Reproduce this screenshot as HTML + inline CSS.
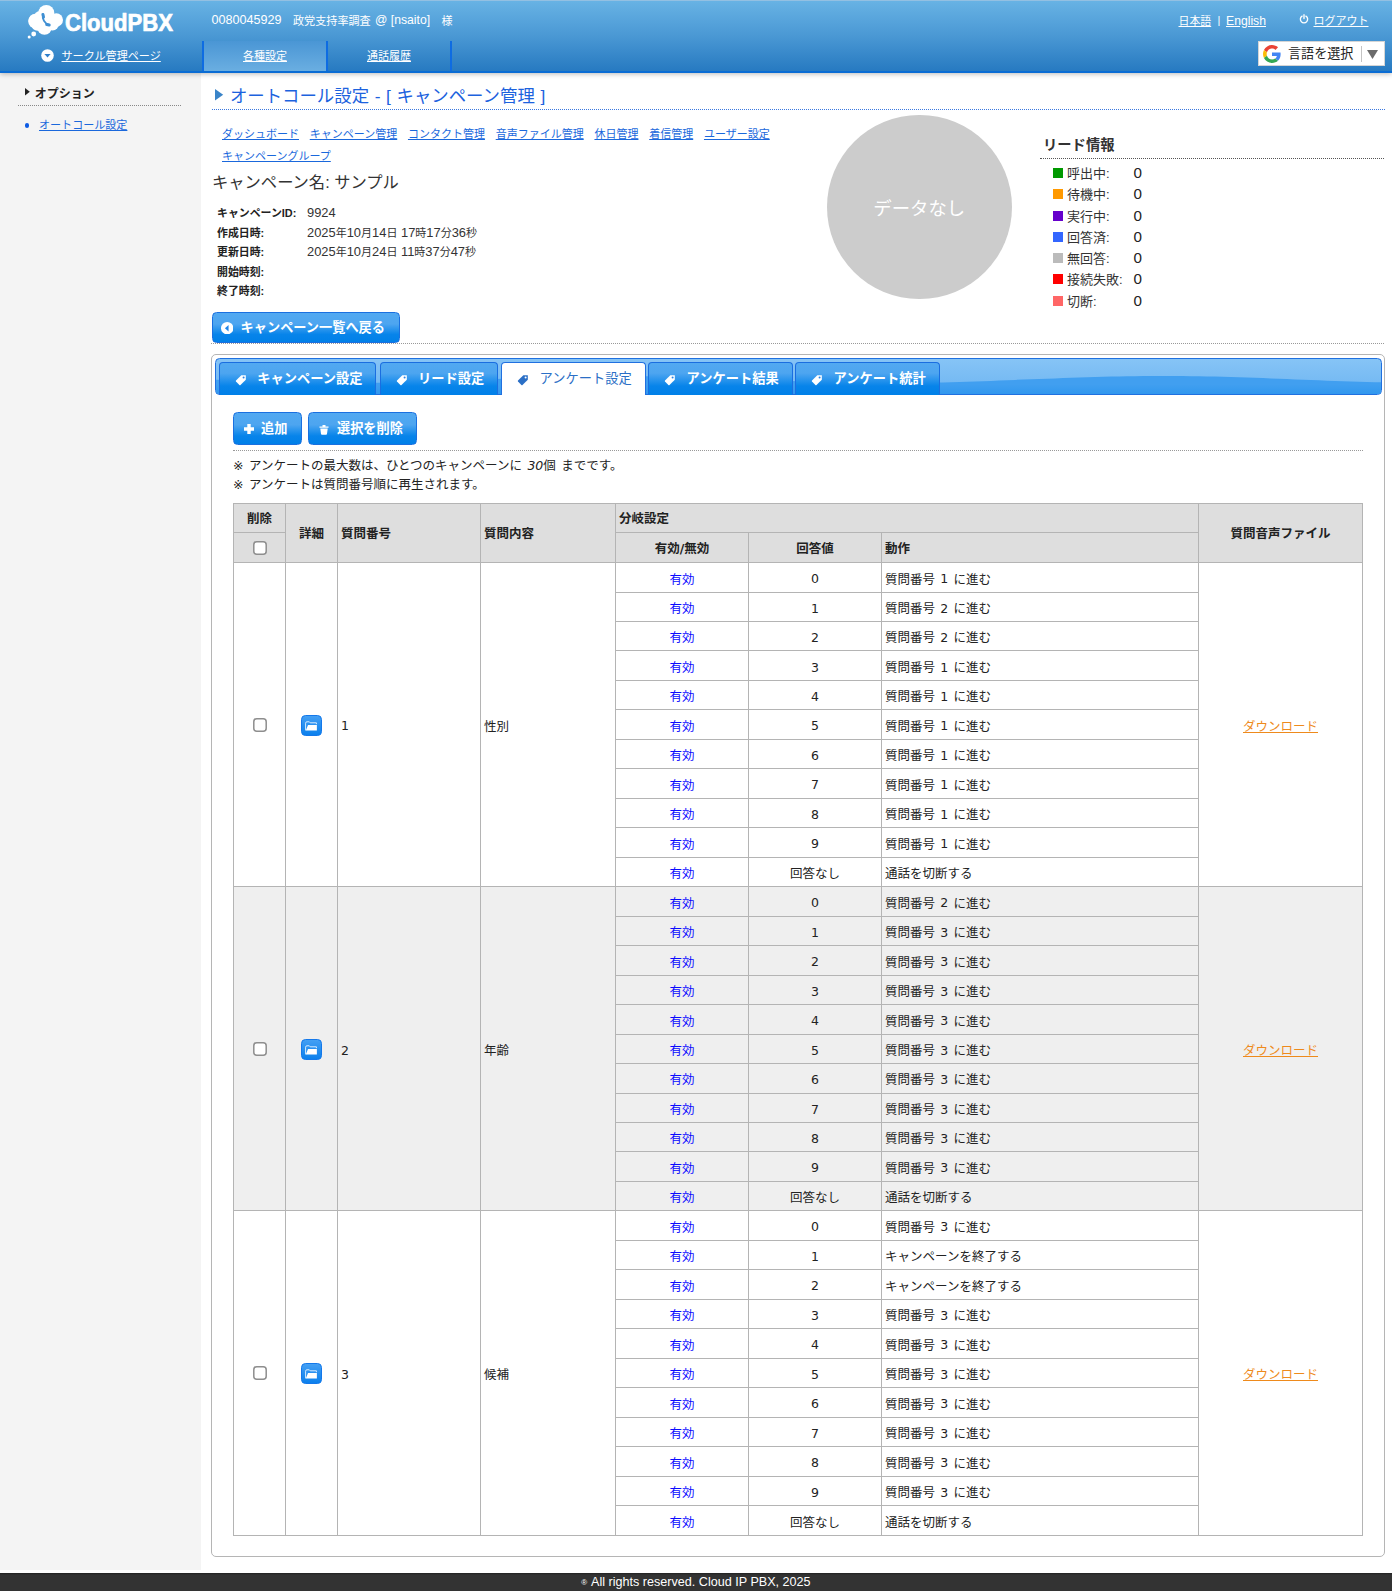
<!DOCTYPE html>
<html lang="ja">
<head>
<meta charset="utf-8">
<title>CloudPBX - オートコール設定</title>
<style>
html,body{margin:0;padding:0;}
html{overflow:hidden;}
body{width:1392px;height:1591px;position:relative;overflow:hidden;background:#fff;
 font-family:"Liberation Sans","Noto Sans CJK JP",sans-serif;font-size:12px;color:#333;}
a{color:#1a68dc;text-decoration:underline;}
.abs{position:absolute;}
/* header */
#hd{position:absolute;left:0;top:0;width:1392px;height:71px;
 background:linear-gradient(#93c0e2 0,#93c0e2 1px,#67b2e4 1.5px,#4a98d4 36px,#277ac1 71px);border-bottom:2px solid #0a6cd4;box-shadow:0 1px 5px rgba(0,0,0,.28);z-index:5;}
#hd a{color:#fff;}
#logo{position:absolute;left:20px;top:0;}
#who span{position:absolute;top:13px;color:#fff;font-size:12.6px;line-height:15px;white-space:nowrap;}
#circle{position:absolute;left:41px;top:48px;color:#fff;font-size:11.1px;line-height:15px;white-space:nowrap;}
#circle a{position:absolute;left:20.5px;top:1px;}
.ntab{position:absolute;top:41px;height:30px;border-left:2px solid #0e6ce2;box-sizing:border-box;text-align:center;font-size:11px;line-height:30px;color:#fff;}
.ntab.on{background:linear-gradient(#4a96d5,#6aaee1);}
#lang span,#lang a{position:absolute;top:13.5px;color:#fff;font-size:12.2px;line-height:15px;white-space:nowrap;}
#logout a{position:absolute;left:1313.5px;top:14px;color:#fff;font-size:11px;line-height:15px;white-space:nowrap;}
#gt{position:absolute;left:1258px;top:41px;width:126.5px;height:25px;background:#fff;border:1px solid #d5d5d5;box-sizing:border-box;color:#222;font-size:13.1px;line-height:23px;white-space:nowrap;}
/* sidebar */
#side{position:absolute;left:0;top:72px;width:201px;height:1498px;background:#f4f4f4;}
#side h3{position:absolute;left:34.8px;top:15.2px;margin:0;font-size:12px;line-height:14px;color:#222;font-weight:bold;white-space:nowrap;}
#side .dot{position:absolute;left:18px;top:33px;width:163px;border-top:1px dotted #888;}
#side .it{position:absolute;left:25px;top:45.8px;font-size:11px;line-height:14px;white-space:nowrap;color:#1a6fd6;}
/* main */
#title{position:absolute;left:229.9px;top:84px;font-size:17.4px;line-height:24px;color:#1c62de;word-spacing:0.8px;white-space:nowrap;}
.dotline{position:absolute;height:0;border-top:1px dotted #999;}
#sub{position:absolute;left:222px;top:123px;width:580px;font-size:11px;line-height:22px;}
#sub a{margin-right:7.7px;white-space:nowrap;}
#cname{position:absolute;left:212px;top:170px;font-size:16.3px;line-height:24px;color:#333;white-space:nowrap;}
#info{position:absolute;left:217px;top:203px;font-size:12.9px;line-height:19.5px;color:#333;}
#info b{font-size:10.9px;}
#info u{font-size:11px;text-decoration:none;}
#info div{height:19.5px;white-space:nowrap;}
#info b{display:inline-block;width:90px;color:#222;}
.btn{position:absolute;box-sizing:border-box;border:1px solid #1a70e0;border-radius:4.5px;color:#fff;font-weight:bold;
 background:linear-gradient(#52a9f1 0%,#4da5f0 38%,#0784ea 74%,#0080e8 100%);white-space:nowrap;font-size:13.2px;}
#back{left:212px;top:311.5px;width:188px;height:31.5px;line-height:30px;padding-left:27.6px;}
#pie{position:absolute;left:827px;top:114.8px;width:184.5px;height:184.5px;border-radius:50%;background:#ccc;color:#fff;font-size:18.4px;line-height:187px;text-align:center;}
#lead{position:absolute;left:1043px;top:136px;font-size:14.3px;line-height:18px;font-weight:bold;color:#333;white-space:nowrap;}
#legend{position:absolute;left:1053px;top:163px;font-size:13px;color:#333;}
#legend div{height:21.3px;line-height:21.3px;white-space:nowrap;position:relative;}
#legend i{display:inline-block;width:10px;height:10px;vertical-align:0;margin-right:4px;}
#legend span{position:absolute;left:80.5px;top:-1px;font-size:15.2px;color:#222;}
/* tabs box */
#box{position:absolute;left:211px;top:354px;width:1173.5px;height:1203px;box-sizing:border-box;border:1px solid #b5b5b5;border-radius:5px;background:#fff;}
#tbar{position:absolute;left:215px;top:358px;width:1166.5px;height:37px;box-sizing:border-box;border:1px solid #2070e0;border-radius:4.5px;overflow:hidden;
 background:linear-gradient(#86c4f6 0%,#76baf3 65%,#72b8f3 100%);}
#tbar svg{position:absolute;left:-1px;top:-1px;}
.tab{position:absolute;top:362px;height:33px;box-sizing:border-box;border:1px solid #1a6ee0;border-bottom:none;border-radius:4px 4px 0 0;
 background:linear-gradient(#52a9f1 0%,#4da5f0 32%,#0784ea 72%,#0080e8 100%);color:#fff;font-weight:bold;font-size:13.25px;line-height:32px;white-space:nowrap;padding-left:37.5px;}
.tab.on{background:#fff;color:#2b6fc6;font-weight:normal;border-color:#2070e0;height:33px;}
.tab svg{position:absolute;left:15px;top:10.5px;}
#add{left:233px;top:412px;width:69px;height:33px;line-height:31px;padding-left:27px;}
#del{left:308px;top:412px;width:109px;height:33px;line-height:31px;padding-left:28px;}
#note{position:absolute;left:233px;top:457.3px;font-size:12.5px;word-spacing:1.5px;line-height:18.6px;color:#222;white-space:nowrap;font-family:"DejaVu Sans","Noto Sans CJK JP",sans-serif;}
/* table */
#tb{position:absolute;left:233px;top:502.6px;width:1130px;border-collapse:collapse;table-layout:fixed;font-family:"DejaVu Sans","Noto Sans CJK JP",sans-serif;font-size:12.5px;word-spacing:1.3px;color:#222;}
#tb td,#tb th{border:1px solid #b4b4b4;padding:3.6px 3px 0 3px;overflow:hidden;white-space:nowrap;text-align:left;vertical-align:middle;}
#tb th{background:#dedede;font-weight:bold;height:27.8px;color:#222;padding-top:0.4px;}
#tb tr.h2 th{height:29.3px;padding-top:0;}
#tb tr.h2 th .cb{position:relative;top:-0.5px;}
#tb th[rowspan]{padding-top:0;padding-bottom:1.6px;height:26.6px;}
#tb td{height:24.875px;line-height:18px;}
#tb .c{text-align:center;}
#tb .en{color:#0a0aff;}
#tb tr.even td{background:#efefef;}
#tb .num{font-weight:normal;}
#tb td.ic{padding:0;line-height:0;text-align:center;}
#tb .j{position:relative;top:0.4px;}
#tb .d{position:relative;top:-0.4px;}
.cb{display:inline-block;vertical-align:middle;}
.fold{display:block;margin:0 auto;position:relative;top:1px;}
#tb td.ic .cb{display:block;margin:0 auto;position:relative;top:0.5px;}
.dl{color:#ee8a1c;text-decoration:underline;}
#ft{position:absolute;left:0;top:1572.5px;width:1392px;height:18.5px;background:linear-gradient(#222 0,#333 2px);color:#fff;font-size:12.6px;line-height:19.5px;text-align:center;white-space:nowrap;}
</style>
</head>
<body>
<div id="hd">
  <div id="logo">
    <svg width="170" height="45" viewBox="20 0 170 45">
      <g fill="#fff">
        <circle cx="46.300" cy="13" r="8"/><circle cx="35.200" cy="20.500" r="6.700"/><circle cx="56.300" cy="20" r="6.700"/><circle cx="44.500" cy="27.500" r="7.300"/><circle cx="40" cy="17" r="6"/><circle cx="51" cy="22" r="7"/><circle cx="37.500" cy="24.500" r="6.200"/><circle cx="52.500" cy="24" r="6.500"/><circle cx="35" cy="21.500" r="6.700"/>
        <circle cx="33.700" cy="34" r="2.400"/><circle cx="29.200" cy="37" r="1.500"/>
      </g>
      <path d="M43.100 14.300C41.700 18.600 44.700 23.600 49 24.800" fill="none" stroke="#3f8fd3" stroke-width="1.700" stroke-linecap="round"/>
      <path d="M42.900 14.400l.6 2.600M46.700 24.600l2.500.4" fill="none" stroke="#3f8fd3" stroke-width="3" stroke-linecap="round"/>
      <text x="65" y="30.500" font-family="'Liberation Sans',sans-serif" font-weight="bold" font-size="23" fill="#fff" stroke="#fff" stroke-width="0.700" textLength="108" lengthAdjust="spacingAndGlyphs">CloudPBX</text>
    </svg>
  </div>
  <div id="who"><span style="left:211.500px">0080045929</span><span style="left:293px;font-size:11.100px;top:13.500px">政党支持率調査</span><span style="left:375px;font-size:12.200px">@ [nsaito]</span><span style="left:441.500px;font-size:11.100px;top:13.500px">様</span></div>
  <div id="circle"><svg width="13" height="13" viewBox="0 0 13 13" style="position:absolute;left:0;top:0.800px"><circle cx="6.500" cy="6.500" r="6.300" fill="#fff"/><path d="M3.400 5l3.100 3.600 3.100-3.600z" fill="#2f7fcb"/></svg><a>サークル管理ページ</a></div>
  <div class="ntab on" style="left:202px;width:124px;"><a>各種設定</a></div>
  <div class="ntab" style="left:326px;width:124px;"><a>通話履歴</a></div>
  <div class="ntab" style="left:450px;width:4px;"></div>
  <div id="lang"><a style="left:1178.500px;font-size:10.900px;top:14px">日本語</a><span style="left:1217.500px;font-size:11px;top:13px">|</span><a style="left:1226px">English</a></div>
  <div id="logout"><svg width="10" height="10" viewBox="0 0 11 11" style="position:absolute;left:1299px;top:14px"><path d="M3.400 2.400a4 4 0 1 0 4.200 0" fill="none" stroke="#fff" stroke-width="1.500" stroke-linecap="round"/><path d="M5.500 0.800v4.200" stroke="#fff" stroke-width="1.500" stroke-linecap="round"/></svg><a>ログアウト</a></div>
  <div id="gt">
    <svg width="18" height="18" viewBox="0 0 48 48" style="position:absolute;left:3.500px;top:2.500px"><path fill="#EA4335" d="M24 9.500c3.540 0 6.710 1.220 9.210 3.600l6.850-6.850C35.900 2.380 30.470 0 24 0 14.620 0 6.510 5.380 2.560 13.220l7.980 6.190C12.430 13.720 17.740 9.500 24 9.500z"/><path fill="#4285F4" d="M46.980 24.550c0-1.570-.15-3.090-.38-4.550H24v9.020h12.940c-.58 2.960-2.260 5.480-4.780 7.180l7.730 6c4.510-4.180 7.090-10.360 7.090-17.650z"/><path fill="#FBBC05" d="M10.530 28.590c-.48-1.450-.76-2.990-.76-4.590s.27-3.140.76-4.590l-7.980-6.190C.92 16.460 0 20.120 0 24c0 3.880.92 7.540 2.560 10.780l7.970-6.190z"/><path fill="#34A853" d="M24 48c6.480 0 11.930-2.130 15.890-5.810l-7.730-6c-2.150 1.450-4.920 2.300-8.160 2.300-6.260 0-11.570-4.220-13.470-9.910l-7.980 6.190C6.510 42.620 14.620 48 24 48z"/></svg>
    <span style="position:absolute;left:29px;top:0">言語を選択</span>
    <span style="position:absolute;left:101.500px;top:4px;width:1px;height:16px;background:#c4c4c4"></span>
    <svg width="11" height="9" viewBox="0 0 11 9" style="position:absolute;left:108px;top:7.500px"><path d="M0 0h11l-5.500 9z" fill="#6b6b6b"/></svg>
  </div>
</div>

<div id="side">
  <svg width="6" height="8" viewBox="0 0 6 8" style="position:absolute;left:25px;top:15.600px"><path d="M0 0l4.800 3.800L0 7.600z" fill="#222"/></svg><h3>オプション</h3>
  <div class="dot"></div>
  <div class="it"><span style="position:absolute;left:-0.300px;top:5.200px;width:4.600px;height:4.600px;border-radius:50%;background:#0d5be3"></span><a style="position:absolute;left:14px;top:0;font-size:11.050px">オートコール設定</a></div>
</div>

<svg width="9" height="12" viewBox="0 0 9 12" style="position:absolute;left:214.500px;top:89.300px"><path d="M0 0l8.200 5.800L0 11.600z" fill="#3a84c8"/></svg>
<div id="title">オートコール設定 - [ キャンペーン管理 ]</div>
<div class="dotline" style="left:211.500px;top:109px;width:1173px;border-top-color:#3a78e0"></div>

<div id="sub"><a>ダッシュボード</a> <a>キャンペーン管理</a> <a>コンタクト管理</a> <a>音声ファイル管理</a> <a>休日管理</a> <a>着信管理</a> <a>ユーザー設定</a> <a>キャンペーングループ</a></div>
<div id="cname">キャンペーン名: サンプル</div>
<div id="info">
  <div><b>キャンペーンID:</b>9924</div>
  <div><b>作成日時:</b>2025<u>年</u>10<u>月</u>14<u>日</u> 17<u>時</u>17<u>分</u>36<u>秒</u></div>
  <div><b>更新日時:</b>2025<u>年</u>10<u>月</u>24<u>日</u> 11<u>時</u>37<u>分</u>47<u>秒</u></div>
  <div><b>開始時刻:</b></div>
  <div><b>終了時刻:</b></div>
</div>
<div id="back" class="btn"><svg width="12.400" height="12.400" viewBox="0 0 12 12" style="position:absolute;left:7.700px;top:9.200px"><circle cx="6" cy="6" r="6" fill="#fff"/><path d="M7.300 2.900v6.200L3.800 6z" fill="#1f85ea"/></svg>キャンペーン一覧へ戻る</div>
<div class="dotline" style="left:211px;top:343px;width:1173px;"></div>

<div id="pie">データなし</div>
<div id="lead">リード情報</div>
<div class="dotline" style="left:1040px;top:158px;width:344px;border-top-color:#555"></div>
<div id="legend">
  <div><i style="background:#009900"></i>呼出中:<span>0</span></div>
  <div><i style="background:#ff9900"></i>待機中:<span>0</span></div>
  <div><i style="background:#6600cc"></i>実行中:<span>0</span></div>
  <div><i style="background:#3366ff"></i>回答済:<span>0</span></div>
  <div><i style="background:#bbbbbb"></i>無回答:<span>0</span></div>
  <div><i style="background:#ff0000"></i>接続失敗:<span>0</span></div>
  <div><i style="background:#ff6666"></i>切断:<span>0</span></div>
</div>

<div id="box"></div>
<div id="tbar"><svg width="1167" height="37" viewBox="0 0 1167 37"><defs><linearGradient id="wv" x1="0" y1="0" x2="0" y2="1"><stop offset="0.450" stop-color="#419ff0"/><stop offset="1" stop-color="#2f97ee"/></linearGradient></defs><path d="M0 37L0 21.7L8 22.0L16 22.3L24 22.6L32 22.9L40 23.2L48 23.5L56 23.8L64 24.0L72 24.2L80 24.4L88 24.6L96 24.7L104 24.8L112 24.9L120 25.0L128 25.0L136 25.0L144 25.0L152 24.9L160 24.8L168 24.7L176 24.5L184 24.4L192 24.2L200 24.0L208 23.7L216 23.5L224 23.2L232 22.9L240 22.6L248 22.3L256 22.0L264 21.6L272 21.3L280 21.0L288 20.7L296 20.4L304 20.1L312 19.8L320 19.5L328 19.2L336 19.0L344 18.8L352 18.6L360 18.4L368 18.3L376 18.2L384 18.1L392 18.0L400 18.0L408 18.0L416 18.0L424 18.1L432 18.2L440 18.3L448 18.5L456 18.6L464 18.8L472 19.0L480 19.3L488 19.5L496 19.8L504 20.1L512 20.4L520 20.7L528 21.0L536 21.4L544 21.7L552 22.0L560 22.3L568 22.6L576 22.9L584 23.2L592 23.5L600 23.8L608 24.0L616 24.2L624 24.4L632 24.6L640 24.7L648 24.8L656 24.9L664 25.0L672 25.0L680 25.0L688 25.0L696 24.9L704 24.8L712 24.7L720 24.5L728 24.4L736 24.2L744 23.9L752 23.7L760 23.4L768 23.2L776 22.9L784 22.6L792 22.3L800 21.9L808 21.6L816 21.3L824 21.0L832 20.7L840 20.4L848 20.1L856 19.8L864 19.5L872 19.2L880 19.0L888 18.8L896 18.6L904 18.4L912 18.3L920 18.2L928 18.1L936 18.0L944 18.0L952 18.0L960 18.0L968 18.1L976 18.2L984 18.3L992 18.5L1000 18.6L1008 18.8L1016 19.1L1024 19.3L1032 19.6L1040 19.8L1048 20.1L1056 20.4L1064 20.7L1072 21.1L1080 21.4L1088 21.7L1096 22.0L1104 22.3L1112 22.7L1120 23.0L1128 23.2L1136 23.5L1144 23.8L1152 24.0L1160 24.2L1168 24.4L1168 37z" fill="url(#wv)"/></svg></div>
<div class="tab" style="left:218.700px;width:157.500px;"><svg width="12" height="12" viewBox="0 0 12 12"><path d="M6.300 1.200h4.500v4.500l-5.300 5.300a.8.8 0 0 1-1.100 0L1 7.600a.8.800 0 0 1 0-1.100z" fill="#fff" transform="rotate(0 6 6)"/><circle cx="8.600" cy="3.400" r="1" fill="#2a84e6"/></svg>キャンペーン設定</div>
<div class="tab" style="left:379.500px;width:118.500px;"><svg width="12" height="12" viewBox="0 0 12 12"><path d="M6.300 1.200h4.500v4.500l-5.300 5.300a.8.8 0 0 1-1.100 0L1 7.600a.8.800 0 0 1 0-1.100z" fill="#fff" transform="rotate(0 6 6)"/><circle cx="8.600" cy="3.400" r="1" fill="#2a84e6"/></svg>リード設定</div>
<div class="tab on" style="left:501px;width:144.700px;"><svg width="12" height="12" viewBox="0 0 12 12"><path d="M6.300 1.200h4.500v4.500l-5.300 5.300a.8.8 0 0 1-1.100 0L1 7.600a.8.800 0 0 1 0-1.100z" fill="#2b6fc6" transform="rotate(0 6 6)"/><circle cx="8.600" cy="3.400" r="1" fill="#fff"/></svg>アンケート設定</div>
<div class="tab" style="left:648px;width:145px;"><svg width="12" height="12" viewBox="0 0 12 12"><path d="M6.300 1.200h4.500v4.500l-5.300 5.300a.8.8 0 0 1-1.100 0L1 7.600a.8.800 0 0 1 0-1.100z" fill="#fff" transform="rotate(0 6 6)"/><circle cx="8.600" cy="3.400" r="1" fill="#2a84e6"/></svg>アンケート結果</div>
<div class="tab" style="left:795px;width:145px;"><svg width="12" height="12" viewBox="0 0 12 12"><path d="M6.300 1.200h4.500v4.500l-5.300 5.300a.8.8 0 0 1-1.100 0L1 7.600a.8.800 0 0 1 0-1.100z" fill="#fff" transform="rotate(0 6 6)"/><circle cx="8.600" cy="3.400" r="1" fill="#2a84e6"/></svg>アンケート統計</div>

<div id="add" class="btn"><svg width="10" height="10" viewBox="0 0 10 10" style="position:absolute;left:10px;top:11px"><path d="M3.300 0h3.400v3.300H10v3.400H6.700V10H3.300V6.700H0V3.300h3.300z" fill="#fff"/></svg>追加</div>
<div id="del" class="btn"><svg width="10" height="11" viewBox="0 0 10 11" style="position:absolute;left:10px;top:11px"><path d="M0.500 2.500h9v1.300h-9z M3.500 1h3v1.500h-3z M1.300 4.600h7.400l-.7 5.400a1 1 0 0 1-1 .8H3a1 1 0 0 1-1-.8z" fill="#fff"/></svg>選択を削除</div>
<div class="dotline" style="left:233px;top:450px;width:1130px;"></div>
<div id="note">※ アンケートの最大数は、ひとつのキャンペーンに <i>30</i>個 までです。<br>※ アンケートは質問番号順に再生されます。</div>

<table id="tb">
<colgroup><col style="width:52px"><col style="width:52px"><col style="width:143px"><col style="width:135px"><col style="width:133px"><col style="width:133px"><col style="width:317px"><col style="width:164px"></colgroup>
<tr><th class="c">削除</th><th rowspan="2" class="c">詳細</th><th rowspan="2">質問番号</th><th rowspan="2">質問内容</th><th colspan="3">分岐設定</th><th rowspan="2" class="c">質問音声ファイル</th></tr>
<tr class="h2"><th class="c"><svg class="cb" width="14" height="14" viewBox="0 0 14 14"><rect x="0.800" y="0.800" width="12.400" height="12.400" rx="3" fill="#fff" stroke="#8e8e8e" stroke-width="1.500"/></svg></th><th class="c">有効/無効</th><th class="c">回答値</th><th>動作</th></tr>
<tr class="odd"><td rowspan="11" class="ic"><svg class="cb" width="14" height="14" viewBox="0 0 14 14"><rect x="0.800" y="0.800" width="12.400" height="12.400" rx="3" fill="#fff" stroke="#8e8e8e" stroke-width="1.500"/></svg></td><td rowspan="11" class="ic"><svg class="fold" viewBox="0 0 21 21" width="21" height="21"><defs><linearGradient id="fg" x1="0" y1="0" x2="0" y2="1"><stop offset="0" stop-color="#45a0f4"/><stop offset="1" stop-color="#0a7fec"/></linearGradient></defs><rect x="0.5" y="0.5" width="20" height="20" rx="4" fill="url(#fg)" stroke="#1478ea"/><path d="M4.600 15.400V8.200q0-1.400 1.400-1.400h2.300l.9 1h6.200v1.400" fill="none" stroke="#d9ecfd" stroke-width="1"/><path d="M7 10h8.900v5.600H4.800z" fill="#fff"/></svg></td><td rowspan="11" class="num">1</td><td rowspan="11"><span class="j">性別</span></td><td class="c en"><span class="j">有効</span></td><td class="c">0</td><td><span class="j">質問番号 <span class="d">1</span> に進む</span></td><td rowspan="11" class="c"><a class="dl j">ダウンロード</a></td></tr>
<tr class="odd"><td class="c en"><span class="j">有効</span></td><td class="c">1</td><td><span class="j">質問番号 <span class="d">2</span> に進む</span></td></tr>
<tr class="odd"><td class="c en"><span class="j">有効</span></td><td class="c">2</td><td><span class="j">質問番号 <span class="d">2</span> に進む</span></td></tr>
<tr class="odd"><td class="c en"><span class="j">有効</span></td><td class="c">3</td><td><span class="j">質問番号 <span class="d">1</span> に進む</span></td></tr>
<tr class="odd"><td class="c en"><span class="j">有効</span></td><td class="c">4</td><td><span class="j">質問番号 <span class="d">1</span> に進む</span></td></tr>
<tr class="odd"><td class="c en"><span class="j">有効</span></td><td class="c">5</td><td><span class="j">質問番号 <span class="d">1</span> に進む</span></td></tr>
<tr class="odd"><td class="c en"><span class="j">有効</span></td><td class="c">6</td><td><span class="j">質問番号 <span class="d">1</span> に進む</span></td></tr>
<tr class="odd"><td class="c en"><span class="j">有効</span></td><td class="c">7</td><td><span class="j">質問番号 <span class="d">1</span> に進む</span></td></tr>
<tr class="odd"><td class="c en"><span class="j">有効</span></td><td class="c">8</td><td><span class="j">質問番号 <span class="d">1</span> に進む</span></td></tr>
<tr class="odd"><td class="c en"><span class="j">有効</span></td><td class="c">9</td><td><span class="j">質問番号 <span class="d">1</span> に進む</span></td></tr>
<tr class="odd"><td class="c en"><span class="j">有効</span></td><td class="c"><span class="j">回答なし</span></td><td><span class="j">通話を切断する</span></td></tr>
<tr class="even"><td rowspan="11" class="ic"><svg class="cb" width="14" height="14" viewBox="0 0 14 14"><rect x="0.800" y="0.800" width="12.400" height="12.400" rx="3" fill="#fff" stroke="#8e8e8e" stroke-width="1.500"/></svg></td><td rowspan="11" class="ic"><svg class="fold" viewBox="0 0 21 21" width="21" height="21"><defs><linearGradient id="fg" x1="0" y1="0" x2="0" y2="1"><stop offset="0" stop-color="#45a0f4"/><stop offset="1" stop-color="#0a7fec"/></linearGradient></defs><rect x="0.5" y="0.5" width="20" height="20" rx="4" fill="url(#fg)" stroke="#1478ea"/><path d="M4.600 15.400V8.200q0-1.400 1.400-1.400h2.300l.9 1h6.200v1.400" fill="none" stroke="#d9ecfd" stroke-width="1"/><path d="M7 10h8.900v5.600H4.800z" fill="#fff"/></svg></td><td rowspan="11" class="num">2</td><td rowspan="11"><span class="j">年齢</span></td><td class="c en"><span class="j">有効</span></td><td class="c">0</td><td><span class="j">質問番号 <span class="d">2</span> に進む</span></td><td rowspan="11" class="c"><a class="dl j">ダウンロード</a></td></tr>
<tr class="even"><td class="c en"><span class="j">有効</span></td><td class="c">1</td><td><span class="j">質問番号 <span class="d">3</span> に進む</span></td></tr>
<tr class="even"><td class="c en"><span class="j">有効</span></td><td class="c">2</td><td><span class="j">質問番号 <span class="d">3</span> に進む</span></td></tr>
<tr class="even"><td class="c en"><span class="j">有効</span></td><td class="c">3</td><td><span class="j">質問番号 <span class="d">3</span> に進む</span></td></tr>
<tr class="even"><td class="c en"><span class="j">有効</span></td><td class="c">4</td><td><span class="j">質問番号 <span class="d">3</span> に進む</span></td></tr>
<tr class="even"><td class="c en"><span class="j">有効</span></td><td class="c">5</td><td><span class="j">質問番号 <span class="d">3</span> に進む</span></td></tr>
<tr class="even"><td class="c en"><span class="j">有効</span></td><td class="c">6</td><td><span class="j">質問番号 <span class="d">3</span> に進む</span></td></tr>
<tr class="even"><td class="c en"><span class="j">有効</span></td><td class="c">7</td><td><span class="j">質問番号 <span class="d">3</span> に進む</span></td></tr>
<tr class="even"><td class="c en"><span class="j">有効</span></td><td class="c">8</td><td><span class="j">質問番号 <span class="d">3</span> に進む</span></td></tr>
<tr class="even"><td class="c en"><span class="j">有効</span></td><td class="c">9</td><td><span class="j">質問番号 <span class="d">3</span> に進む</span></td></tr>
<tr class="even"><td class="c en"><span class="j">有効</span></td><td class="c"><span class="j">回答なし</span></td><td><span class="j">通話を切断する</span></td></tr>
<tr class="odd"><td rowspan="11" class="ic"><svg class="cb" width="14" height="14" viewBox="0 0 14 14"><rect x="0.800" y="0.800" width="12.400" height="12.400" rx="3" fill="#fff" stroke="#8e8e8e" stroke-width="1.500"/></svg></td><td rowspan="11" class="ic"><svg class="fold" viewBox="0 0 21 21" width="21" height="21"><defs><linearGradient id="fg" x1="0" y1="0" x2="0" y2="1"><stop offset="0" stop-color="#45a0f4"/><stop offset="1" stop-color="#0a7fec"/></linearGradient></defs><rect x="0.5" y="0.5" width="20" height="20" rx="4" fill="url(#fg)" stroke="#1478ea"/><path d="M4.600 15.400V8.200q0-1.400 1.400-1.400h2.300l.9 1h6.200v1.400" fill="none" stroke="#d9ecfd" stroke-width="1"/><path d="M7 10h8.900v5.600H4.800z" fill="#fff"/></svg></td><td rowspan="11" class="num">3</td><td rowspan="11"><span class="j">候補</span></td><td class="c en"><span class="j">有効</span></td><td class="c">0</td><td><span class="j">質問番号 <span class="d">3</span> に進む</span></td><td rowspan="11" class="c"><a class="dl j">ダウンロード</a></td></tr>
<tr class="odd"><td class="c en"><span class="j">有効</span></td><td class="c">1</td><td><span class="j">キャンペーンを終了する</span></td></tr>
<tr class="odd"><td class="c en"><span class="j">有効</span></td><td class="c">2</td><td><span class="j">キャンペーンを終了する</span></td></tr>
<tr class="odd"><td class="c en"><span class="j">有効</span></td><td class="c">3</td><td><span class="j">質問番号 <span class="d">3</span> に進む</span></td></tr>
<tr class="odd"><td class="c en"><span class="j">有効</span></td><td class="c">4</td><td><span class="j">質問番号 <span class="d">3</span> に進む</span></td></tr>
<tr class="odd"><td class="c en"><span class="j">有効</span></td><td class="c">5</td><td><span class="j">質問番号 <span class="d">3</span> に進む</span></td></tr>
<tr class="odd"><td class="c en"><span class="j">有効</span></td><td class="c">6</td><td><span class="j">質問番号 <span class="d">3</span> に進む</span></td></tr>
<tr class="odd"><td class="c en"><span class="j">有効</span></td><td class="c">7</td><td><span class="j">質問番号 <span class="d">3</span> に進む</span></td></tr>
<tr class="odd"><td class="c en"><span class="j">有効</span></td><td class="c">8</td><td><span class="j">質問番号 <span class="d">3</span> に進む</span></td></tr>
<tr class="odd"><td class="c en"><span class="j">有効</span></td><td class="c">9</td><td><span class="j">質問番号 <span class="d">3</span> に進む</span></td></tr>
<tr class="odd"><td class="c en"><span class="j">有効</span></td><td class="c"><span class="j">回答なし</span></td><td><span class="j">通話を切断する</span></td></tr>
</table>

<div id="ft"><span style="font-size:8px;vertical-align:1px;margin-right:1px">®</span> All rights reserved. Cloud IP PBX, 2025</div>
</body>
</html>
